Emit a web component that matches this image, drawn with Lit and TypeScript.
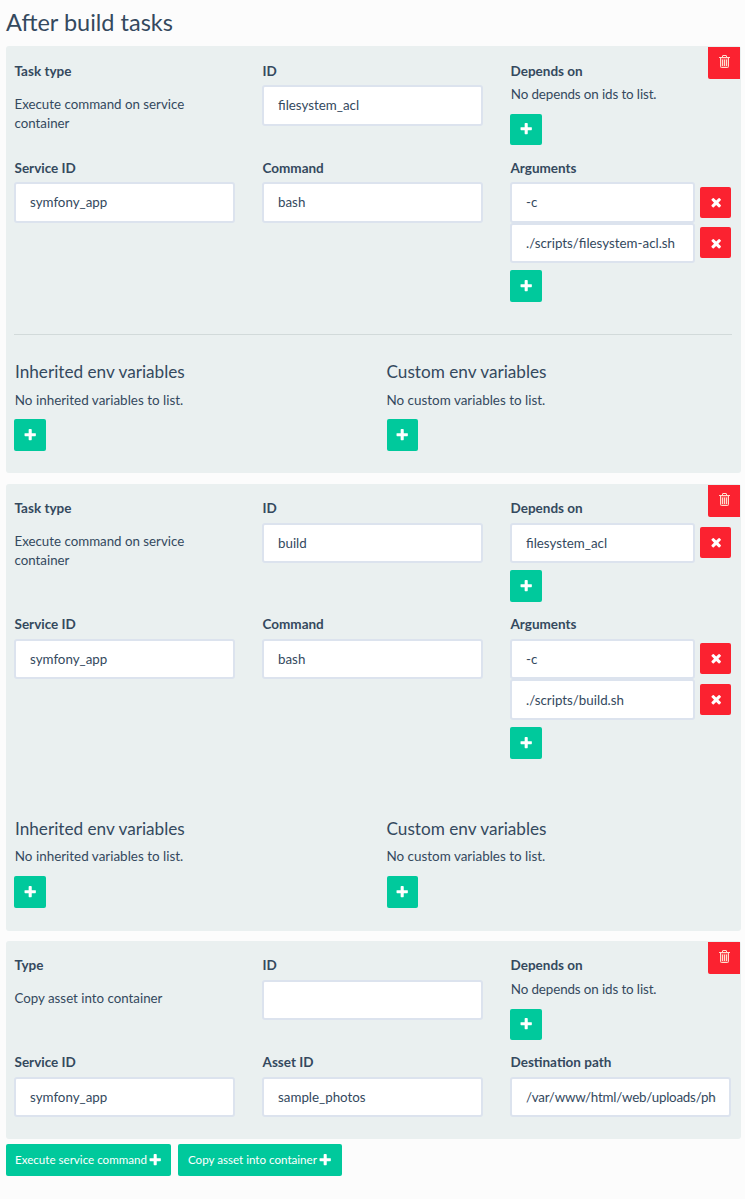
import { LitElement, html, css, svg } from "lit";
import { customElement } from "lit/decorators.js";
import { classMap } from "lit/directives/class-map.js";

const PATHS: Record<string, string> = {
  plus: "M1600 736v192q0 40-28 68t-68 28h-416v416q0 40-28 68t-68 28h-192q-40 0-68-28t-28-68v-416h-416q-40 0-68-28t-28-68v-192q0-40 28-68t68-28h416v-416q0-40 28-68t68-28h192q40 0 68 28t28 68v416h416q40 0 68 28t28 68z",
  times: "M1490 1322q0 40-28 68l-136 136q-28 28-68 28t-68-28l-294-294-294 294q-28 28-68 28t-68-28l-136-136q-28-28-28-68t28-68l294-294-294-294q-28-28-28-68t28-68l136-136q28-28 68-28t68 28l294 294 294-294q28-28 68-28t68 28l136 136q28 28 28 68t-28 68l-294 294 294 294q28 28 28 68z",
};

const icon = (name: string) =>
  html`<svg class="icon" viewBox="0 0 1792 1792">${svg`<path d=${PATHS[name]}></path>`}</svg>`;

const trash = html`<svg class="bin" viewBox="0 0 11 13" fill="none" stroke="currentColor">
  <path fill="currentColor" fill-opacity=".25" stroke="none" d="M1.5 2.5h8v10h-8z"></path>
  <path d="M3.5 2V.9Q3.5.5 4 .5h3q.5 0 .5.4V2M0 2.5h11M1.5 2.5v9q0 1 .9 1h6.2q.9 0 .9-1v-9"></path>
  <path d="M3.5 4.5v6.5M5.5 4.5v6.5M7.5 4.5v6.5"></path>
</svg>`;

interface Task {
  kind: string;
  typeLabel: string;
  type: string;
  id: string;
  dependsOn: string[];
  command: [string, string];
  args?: string[];
  path?: string;
  env?: boolean;
  rule?: boolean;
}

const TASKS: Task[] = [
  {
    kind: "first",
    typeLabel: "Task type",
    type: "Execute command on service container",
    id: "filesystem_acl",
    dependsOn: [],
    command: ["Command", "bash"],
    args: ["-c", "./scripts/filesystem-acl.sh"],
    env: true,
    rule: true,
  },
  {
    kind: "second",
    typeLabel: "Task type",
    type: "Execute command on service container",
    id: "build",
    dependsOn: ["filesystem_acl"],
    command: ["Command", "bash"],
    args: ["-c", "./scripts/build.sh"],
    env: true,
  },
  {
    kind: "third",
    typeLabel: "Type",
    type: "Copy asset into container",
    id: "",
    dependsOn: [],
    command: ["Asset ID", "sample_photos"],
    path: "/var/www/html/web/uploads/photos",
  },
];

@customElement("app-root")
export class AppRoot extends LitElement {
  static styles = css`
    :host {
      display: block;
      box-sizing: border-box;
      height: 1199px;
      padding: 7px 4px 0 6px;
      overflow: hidden;
      background: #fcfcfc;
      color: #34495e;
      font: 13.5px/19px Lato, sans-serif;
    }
    * { box-sizing: border-box; }
    h1 { margin: 0 0 9px; font-size: 23.5px; line-height: 30px; font-weight: 400; }
    .card {
      position: relative;
      padding: 15px 10px 0 8px;
      border-radius: 3px;
      background: #eaf0f0;
    }
    .first { height: 427px; margin-bottom: 11px; }
    .second { height: 446.6px; margin-bottom: 10.4px; padding-top: 14px; }
    .third { height: 198px; padding-top: 14px; margin-bottom: 5.4px; }
    .row { display: grid; grid-template-columns: repeat(3, 221px); column-gap: 27px; height: 97px; }
    .second .top { height: 116px; }
    .low { height: 176px; }
    .label { height: 24px; line-height: 20px; font-weight: 700; padding-left: 0.5px; }
    .second .label { height: 25px; }
    .third .label { height: 25px; }
    .type { padding: 10px 40px 0 0.5px; font-size: 13.3px; }
    .second .type, .third .type { padding-top: 9px; }
    .none { padding: 0 0 0 0.8px; font-size: 13.45px; }
    .row .none { font-size: 13.4px; letter-spacing: -0.12px; }
    .third .row .none { margin-top: -0.4px; }
    .field {
      display: block;
      width: 100%;
      height: 40.5px;
      padding: 0 13px 0 14px;
      border: 2px solid #dce3ee;
      border-radius: 3px;
      background: #fff;
      color: inherit;
      font: inherit;
      font-size: 13.35px;
      outline: none;
    }
    .second .field { height: 40.4px; }
    .third .field { height: 40px; }
    .path .field { letter-spacing: -0.22px; }
    .item { display: grid; grid-template-columns: 185px 31px; column-gap: 5px; align-items: center; }
    .btn {
      display: flex;
      align-items: center;
      justify-content: center;
      width: 32px;
      height: 32px;
      margin: 0;
      padding: 0;
      border: 0;
      border-radius: 2px;
      background: #00c99c;
      color: #fff;
      font: 11.6px/18px Lato, sans-serif;
    }
    .red { background: #fb2230; }
    .item .red { width: 31px; height: 31px; padding-left: 1px; }
    .second .item .red { margin-bottom: 1px; }
    .icon { width: 14.4px; height: 14.4px; fill: currentColor; flex: none; }
    .add { margin-top: 7px; }
    .none + .add { margin-top: 10px; }
    .row .none + .add { height: 31px; }
    .remove {
      position: absolute;
      top: 1px;
      right: 1px;
      padding-bottom: 3px;
      padding-left: 1px;
      border-radius: 0 0 0 2px;
    }
    .bin { width: 11px; height: 13px; color: #ffe0d0; flex: none; }
    .rule { height: 1px; background: #d2dada; margin-right: -1px; }
    .gap { height: 1px; }
    .env { display: grid; grid-template-columns: 1fr 1fr; padding-top: 26px; }
    .second .env { padding-top: 27px; }
    .env > .custom { padding-left: 14px; }
    .env > .custom .none { padding-left: 0; }
    .env > .custom h2 { padding-left: 0; }
    .env > .custom .btn { width: 31px; }
    h2 { margin: 0 0 8px; padding-left: 1px; font-size: 17.2px; line-height: 22px; font-weight: 400; }
    .second h2 { margin-bottom: 7px; }
    .env .none + .add { margin-top: 9px; }
    .second .env .none + .add { margin-top: 10px; }
    .actions { display: flex; gap: 7px; }
    .wide { width: 165px; gap: 0.7px; }
    .wide + .wide { width: 164px; }
  `;

  private field(value: string) {
    return html`<input class="field" type="text" .value=${value} />`;
  }

  private add() {
    return html`<button class="btn add">${icon("plus")}</button>`;
  }

  private list(values: string[]) {
    return values.map(
      (v) => html`<div class="item">${this.field(v)}<button class="btn red">${icon("times")}</button></div>`
    );
  }

  private envColumn(title: string, text: string, custom: boolean) {
    return html`<div class=${classMap({ custom })}>
      <h2>${title}</h2>
      <div class="none">${text}</div>
      ${this.add()}
    </div>`;
  }

  private card(t: Task) {
    return html`<section class="card ${t.kind}">
      <button class="btn red remove">${trash}</button>
      <div class="row top">
        <div><div class="label">${t.typeLabel}</div><div class="type">${t.type}</div></div>
        <div><div class="label">ID</div>${this.field(t.id)}</div>
        <div>
          <div class="label">Depends on</div>
          ${t.dependsOn.length ? this.list(t.dependsOn) : html`<div class="none">No depends on ids to list.</div>`}
          ${this.add()}
        </div>
      </div>
      <div class="row low">
        <div><div class="label">Service ID</div>${this.field("symfony_app")}</div>
        <div><div class="label">${t.command[0]}</div>${this.field(t.command[1])}</div>
        ${t.args
          ? html`<div><div class="label">Arguments</div>${this.list(t.args)}${this.add()}</div>`
          : html`<div class="path"><div class="label">Destination path</div>${this.field(t.path ?? "")}</div>`}
      </div>
      ${t.env
        ? html`<div class=${t.rule ? "rule" : "gap"}></div>
            <div class="env">
              ${this.envColumn("Inherited env variables", "No inherited variables to list.", false)}
              ${this.envColumn("Custom env variables", "No custom variables to list.", true)}
            </div>`
        : ""}
    </section>`;
  }

  render() {
    return html`
      <h1>After build tasks</h1>
      ${TASKS.map((t) => this.card(t))}
      <div class="actions">
        <button class="btn wide">Execute service command${icon("plus")}</button>
        <button class="btn wide">Copy asset into container${icon("plus")}</button>
      </div>
    `;
  }
}
